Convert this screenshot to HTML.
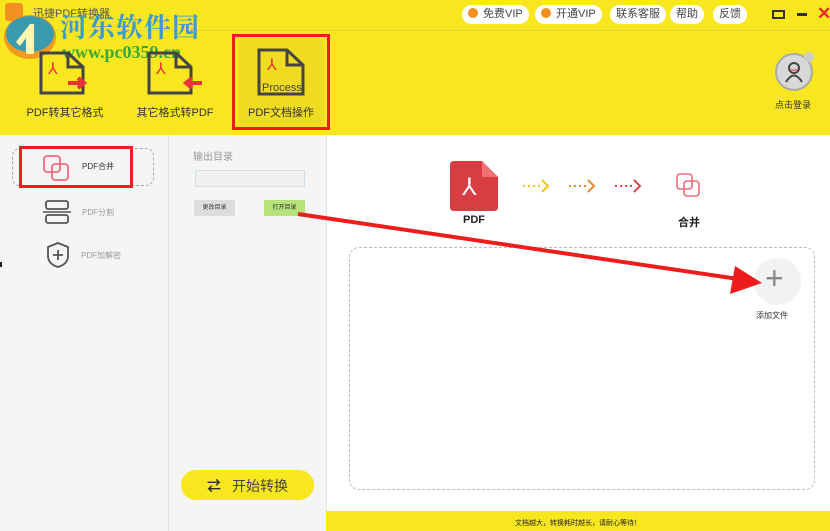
<!DOCTYPE html>
<html><head><meta charset="utf-8"><style>
*{margin:0;padding:0;box-sizing:border-box}
body{width:830px;height:531px;overflow:hidden;position:relative;background:#f5f5f5;font-family:"Liberation Sans","Noto Sans CJK SC",sans-serif;}
.a{position:absolute}
.top{left:0;top:0;width:830px;height:135px;background:#f8e61f}
.pill{position:absolute;top:5px;height:19px;background:#fff;border-radius:10px;font-size:11px;color:#444;line-height:19px;padding:0 6px}
.pill i{display:inline-block;width:10px;height:10px;border-radius:50%;background:#f39020;vertical-align:-1px;margin-right:5px}
.lbl{font-size:11px;color:#333;text-align:center;position:absolute}
</style></head><body>
<div class="a top"></div>
<div class="a" style="left:0;top:30px;width:830px;height:1px;background:#e6d440"></div>
<div class="a" style="left:5px;top:3px;width:18px;height:18px;background:#f39020;border-radius:3px"></div>
<div class="a" style="left:33px;top:5px;font-size:11px;color:#555">迅捷PDF转换器</div>
<svg class="a" style="left:2px;top:12px" width="56" height="50" viewBox="0 0 56 50"><ellipse cx="28" cy="25" rx="26" ry="22" fill="#f29a1e"/><ellipse cx="28" cy="22" rx="24" ry="18" fill="#3a9bb0"/><path d="M14 30 L28 12 L32 12 L32 42 L24 42 L24 26 L18 34Z" fill="#fff6b0"/></svg>
<div class="a" style="left:60px;top:6px;font-size:27px;font-weight:bold;color:#3a9bd0;font-family:'Noto Serif CJK SC',serif;letter-spacing:1px">河东软件园</div>
<div class="a" style="left:62px;top:42px;font-size:18px;font-weight:bold;color:#3aa83a;font-family:'Liberation Serif',serif">www.pc0359.cn</div>
<div class="pill" style="left:462px"><i></i>免费VIP</div>
<div class="pill" style="left:535px"><i></i>开通VIP</div>
<div class="pill" style="left:610px">联系客服</div>
<div class="pill" style="left:670px">帮助</div>
<div class="pill" style="left:713px">反馈</div>
<div class="a" style="left:772px;top:10px;width:13px;height:9px;border:2px solid #333"></div>
<div class="a" style="left:797px;top:13px;width:10px;height:3px;background:#333"></div>
<div class="a" style="left:817px;top:4px;font-size:17px;color:#e8262d;font-weight:bold">✕</div>
<svg class="a" style="left:38px;top:50px" width="54" height="46" viewBox="0 0 54 46"><path d="M3 3 H30 L45 17 V43 H3Z M30 3 V17 H45" fill="none" stroke="#444" stroke-width="3"/><text x="10" y="24" fill="#e8323c" font-size="16" font-family="Liberation Sans">⅄</text><path d="M30 33 H46 M40 28 L46 33 L40 38" stroke="#e8323c" stroke-width="4" fill="#e8323c"/></svg>
<svg class="a" style="left:146px;top:50px" width="56" height="46" viewBox="0 0 56 46"><path d="M3 3 H30 L45 17 V43 H3Z M30 3 V17 H45" fill="none" stroke="#444" stroke-width="3"/><text x="10" y="24" fill="#e8323c" font-size="16">⅄</text><path d="M56 33 H40 M46 28 L40 33 L46 38" stroke="#e8323c" stroke-width="4" fill="#e8323c"/></svg>
<div class="a" style="left:238px;top:38px;width:86px;height:90px;background:#efdc20;border-radius:8px"></div>
<svg class="a" style="left:257px;top:48px" width="48" height="48" viewBox="0 0 48 48"><path d="M2 2 H30 L46 17 V46 H2Z M30 2 V17 H46" fill="none" stroke="#444" stroke-width="3"/><text x="10" y="22" fill="#e8323c" font-size="16">⅄</text><text x="5" y="43" fill="#444" font-size="11">Process</text></svg>
<div class="lbl" style="left:20px;top:104px;width:90px">PDF转其它格式</div>
<div class="lbl" style="left:130px;top:104px;width:90px">其它格式转PDF</div>
<div class="lbl" style="left:236px;top:104px;width:90px">PDF文档操作</div>
<div class="a" style="left:232px;top:34px;width:98px;height:96px;border:3px solid #ee1c1c"></div>
<div class="a" style="left:775px;top:53px;width:38px;height:38px;border-radius:50%;background:#d8d8d8;border:2px solid #aaa"></div>
<svg class="a" style="left:784px;top:61px" width="20" height="22" viewBox="0 0 20 22"><circle cx="10" cy="7" r="5" fill="none" stroke="#444" stroke-width="2"/><path d="M2 21 Q10 8 18 21" fill="none" stroke="#444" stroke-width="2"/><path d="M7 8 Q10 11 13 8" stroke="#e33" fill="none"/></svg>
<div class="a" style="left:804px;top:52px;width:10px;height:10px;border-radius:50%;background:#ccc"></div>
<div class="a" style="left:775px;top:98px;font-size:9px;color:#333">点击登录</div>
<div class="a" style="left:168px;top:135px;width:1px;height:396px;background:#e2e2e2"></div>
<div class="a" style="left:326px;top:135px;width:504px;height:376px;background:#fff;border-left:1px solid #e2e2e2"></div>
<div class="a" style="left:12px;top:148px;width:142px;height:38px;border:1.5px dashed #aaa;border-radius:8px"></div>
<div class="a" style="left:19px;top:146px;width:114px;height:42px;border:3px solid #ee1c1c"></div>
<svg class="a" style="left:42px;top:154px" width="28" height="28"><rect x="2" y="2" width="16" height="16" rx="3" fill="none" stroke="#ef6a7a" stroke-width="1.8"/><rect x="10" y="10" width="16" height="16" rx="3" fill="none" stroke="#ef6a7a" stroke-width="1.8"/></svg>
<div class="a" style="left:82px;top:161px;font-size:8px;color:#333">PDF合并</div>
<svg class="a" style="left:42px;top:199px" width="30" height="26"><rect x="4" y="2" width="22" height="8" rx="2" fill="none" stroke="#555" stroke-width="1.8"/><rect x="4" y="16" width="22" height="8" rx="2" fill="none" stroke="#555" stroke-width="1.8"/><path d="M1 13 H29" stroke="#555" stroke-width="1.5"/></svg>
<div class="a" style="left:82px;top:207px;font-size:8px;color:#999">PDF分割</div>
<svg class="a" style="left:46px;top:241px" width="24" height="28"><path d="M12 2 L22 6 V15 Q22 23 12 26 Q2 23 2 15 V6Z" fill="none" stroke="#555" stroke-width="1.8"/><path d="M12 9 V19 M7 14 H17" stroke="#555" stroke-width="1.8"/></svg>
<div class="a" style="left:81px;top:250px;font-size:8px;color:#999">PDF加解密</div>
<div class="a" style="left:193px;top:148px;font-size:10px;color:#999">输出目录</div>
<div class="a" style="left:195px;top:170px;width:110px;height:17px;background:#f0f0f0;border:1px solid #cfe0ea"></div>
<div class="a" style="left:194px;top:200px;width:41px;height:16px;background:#ddd;font-size:6px;line-height:16px;text-align:center;color:#333">更改目录</div>
<div class="a" style="left:264px;top:200px;width:41px;height:16px;background:#b5e27a;font-size:6px;line-height:16px;text-align:center;color:#333">打开目录</div>
<div class="a" style="left:181px;top:470px;width:133px;height:30px;background:#f8e61f;border-radius:15px"></div>
<div class="a" style="left:207px;top:476px;font-size:14px;color:#333;font-weight:bold">⇄</div>
<div class="a" style="left:232px;top:476px;font-size:14px;color:#444">开始转换</div>
<svg class="a" style="left:450px;top:161px" width="50" height="50"><path d="M4 0 H32 L48 16 V46 Q48 50 44 50 H4 Q0 50 0 46 V4 Q0 0 4 0Z" fill="#d73d43"/><path d="M32 0 V16 H48Z" fill="#f07075"/><text x="12" y="34" fill="#fff" font-size="24">⅄</text></svg>
<div class="a" style="left:463px;top:214px;font-size:11px;font-weight:bold;color:#222">PDF</div>
<svg class="a" style="left:520px;top:176px" width="130" height="20">
<g fill="none" stroke-width="2"><path d="M3 10 H22" stroke="#f3c520" stroke-dasharray="2 3"/><path d="M22 4 L28 10 L22 16" stroke="#f3c520"/>
<path d="M49 10 H68" stroke="#ec8a30" stroke-dasharray="2 3"/><path d="M68 4 L74 10 L68 16" stroke="#ec8a30"/>
<path d="M95 10 H114" stroke="#dd4444" stroke-dasharray="2 3"/><path d="M114 4 L120 10 L114 16" stroke="#dd4444"/></g></svg>
<svg class="a" style="left:675px;top:172px" width="28" height="28"><rect x="2" y="2" width="15" height="15" rx="3" fill="none" stroke="#ef6a7a" stroke-width="1.6"/><rect x="9" y="9" width="15" height="15" rx="3" fill="none" stroke="#ef6a7a" stroke-width="1.6"/></svg>
<div class="a" style="left:678px;top:214px;font-size:11px;font-weight:bold;color:#222">合并</div>
<div class="a" style="left:349px;top:247px;width:466px;height:243px;border:1.5px dashed #bbb;border-radius:10px"></div>
<div class="a" style="left:754px;top:258px;width:47px;height:47px;border-radius:50%;background:#f2f2f2"></div>
<div class="a" style="left:765px;top:260px;font-size:32px;color:#888;font-weight:200">+</div>
<div class="a" style="left:756px;top:310px;font-size:8px;color:#333">添加文件</div>
<div class="a" style="left:326px;top:511px;width:504px;height:20px;background:#f8e61f"></div>
<div class="a" style="left:515px;top:518px;font-size:7px;color:#222">文档越大，转换耗时越长，请耐心等待！</div>
<svg class="a" style="left:0;top:0" width="830" height="531"><path d="M298 214 L752 281" stroke="#ee1c1c" stroke-width="4"/><path d="M762 283 L735 266 L730 294Z" fill="#ee1c1c"/></svg>
<div class="a" style="left:0;top:262px;width:2px;height:5px;background:#222"></div>
</body></html>
